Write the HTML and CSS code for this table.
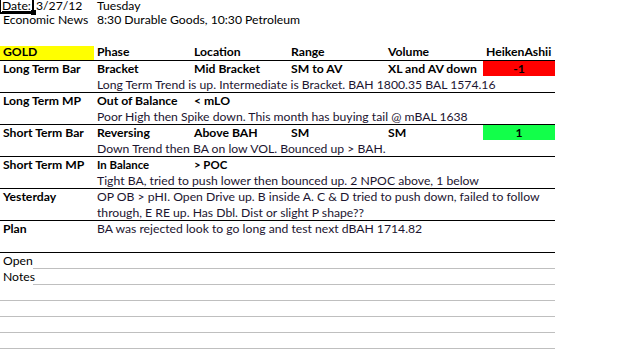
FILE: index.html
```html
<!DOCTYPE html>
<html>
<head>
<meta charset="utf-8">
<link rel="stylesheet" href="styles.css">
</head>
<body>
<div class="sheet">
  <div class="row row1">
    <div class="c sel"><span class="u">Date:</span></div>
    <div class="c">3/27/12</div>
    <div class="c rest">Tuesday</div>
  </div>
  <div class="row">
    <div class="c span2">Economic News</div>
    <div class="c rest">8:30 Durable Goods, 10:30 Petroleum</div>
  </div>
  <div class="row"></div>
  <div class="row hdr">
    <div class="c span2 gold">GOLD</div>
    <div class="c">Phase</div>
    <div class="c">Location</div>
    <div class="c">Range</div>
    <div class="c">Volume</div>
    <div class="c">HeikenAshii</div>
  </div>

  <div class="grp">
    <div class="row b">
      <div class="c span2">Long Term Bar</div>
      <div class="c">Bracket</div>
      <div class="c">Mid Bracket</div>
      <div class="c">SM to AV</div>
      <div class="c">XL and AV down</div>
      <div class="c ha neg">-1</div>
    </div>
    <div class="row sub">
      <div class="c note">Long Term Trend is up. Intermediate is Bracket. BAH 1800.35 BAL 1574.16</div>
    </div>
  </div>

  <div class="grp">
    <div class="row b">
      <div class="c span2">Long Term MP</div>
      <div class="c">Out of Balance</div>
      <div class="c">&lt; mLO</div>
    </div>
    <div class="row sub">
      <div class="c note">Poor High then Spike down. This month has buying tail @ mBAL 1638</div>
    </div>
  </div>

  <div class="grp">
    <div class="row b">
      <div class="c span2">Short Term Bar</div>
      <div class="c">Reversing</div>
      <div class="c">Above BAH</div>
      <div class="c">SM</div>
      <div class="c">SM</div>
      <div class="c ha pos">1</div>
    </div>
    <div class="row sub">
      <div class="c note">Down Trend then BA on low VOL. Bounced up &gt; BAH.</div>
    </div>
  </div>

  <div class="grp">
    <div class="row b">
      <div class="c span2">Short Term MP</div>
      <div class="c small">In Balance</div>
      <div class="c small">&gt; POC</div>
    </div>
    <div class="row sub">
      <div class="c note">Tight BA, tried to push lower then bounced up. 2 NPOC above, 1 below</div>
    </div>
  </div>

  <div class="grp">
    <div class="row">
      <div class="c span2 bold">Yesterday</div>
      <div class="c note">OP OB &gt; pHI. Open Drive up. B inside A. C &amp; D tried to push down, failed to follow</div>
    </div>
    <div class="row sub">
      <div class="c note">through, E RE up. Has Dbl. Dist or slight P shape??</div>
    </div>
  </div>

  <div class="grp">
    <div class="row">
      <div class="c span2 bold">Plan</div>
      <div class="c note">BA was rejected look to go long and test next dBAH 1714.82</div>
    </div>
    <div class="row sub"></div>
  </div>

  <div class="row gl">
    <div class="c">Open</div>
    <div class="line"></div>
  </div>
  <div class="row gl">
    <div class="c">Notes</div>
    <div class="line"></div>
  </div>
  <div class="row gl full"></div>
  <div class="row gl full"></div>
  <div class="row gl full"></div>
  <div class="row gl full"></div>
</div>
</body>
</html>
```

FILE: styles.css
```css
html, body {
  margin: 0;
  padding: 0;
  background: #ffffff;
}

body {
  font-family: Lato, "Liberation Sans", sans-serif;
  font-size: 12.2px;
  color: #000000;
}

.sheet {
  width: 555px;
}

.row {
  display: grid;
  grid-template-columns: 33px 61px 97px 97px 97px 98px 72px;
  height: 16px;
  line-height: 16px;
  white-space: nowrap;
}

.c {
  padding-left: 3px;
  min-width: 0;
}

.span2 {
  grid-column: span 2;
}

.rest {
  grid-column: 3 / -1;
}

.row1 {
  height: 12px;
  line-height: 12px;
}

.sel {
  position: relative;
  padding-left: 2px;
}

.sel::after {
  content: "";
  position: absolute;
  left: -1px;
  top: -4px;
  width: 31px;
  height: 14px;
  border: 2px solid #000;
}

.sel::before {
  content: "";
  position: absolute;
  left: 31px;
  top: 10px;
  width: 5px;
  height: 5px;
  background: #000;
  z-index: 1;
}

.u {
  text-decoration: underline;
}

.hdr {
  height: 17px;
  box-sizing: border-box;
  border-bottom: 1px solid #000;
  font-weight: bold;
}

.gold {
  background: linear-gradient(#ffff00, #ffff00) 0 2px / 100% 14px no-repeat;
}

.grp {
  height: 32px;
  box-sizing: border-box;
  border-bottom: 1px solid #000;
}

.b {
  font-weight: bold;
}

.bold {
  font-weight: bold;
}

.small {
  font-size: 11.4px;
}

.sub {
  height: 15px;
}

.note {
  grid-column: 3 / -1;
  color: #1c1530;
}

.ha {
  padding-left: 0;
  text-align: center;
  height: 15px;
}

.neg {
  background: #ff0000;
}

.pos {
  background: #12ff4a;
}

.gl {
  box-sizing: border-box;
}

.gl .line {
  grid-column: 2 / -1;
  border-bottom: 1px solid #bfbfbf;
}

.gl.full {
  border-bottom: 1px solid #bfbfbf;
}
```
